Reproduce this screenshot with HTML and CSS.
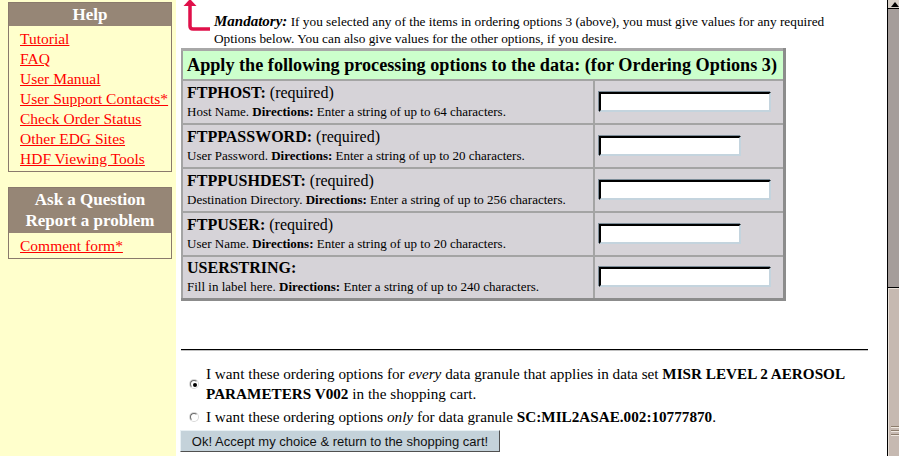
FILE: index.html
```html
<!DOCTYPE html>
<html>
<head>
<meta charset="utf-8">
<link rel="stylesheet" href="styles.css">
</head>
<body>
<div class="page">
  <aside class="sidebar">
    <div class="box">
      <div class="box-head">Help</div>
      <ul class="links">
        <li><a href="#">Tutorial</a></li>
        <li><a href="#">FAQ</a></li>
        <li><a href="#">User Manual</a></li>
        <li><a href="#">User Support Contacts*</a></li>
        <li><a href="#">Check Order Status</a></li>
        <li><a href="#">Other EDG Sites</a></li>
        <li><a href="#">HDF Viewing Tools</a></li>
      </ul>
    </div>
    <div class="box box2">
      <div class="box-head">Ask a Question<br>Report a problem</div>
      <ul class="links">
        <li><a href="#">Comment form*</a></li>
      </ul>
    </div>
  </aside>
  <main class="main">
    <div class="note">
      <svg class="arrow" width="33" height="34" viewBox="0 0 33 34">
        <path d="M9 4 V26 Q9 29 12 29 H29" fill="none" stroke="#e0104a" stroke-width="3.5"/>
        <path d="M2.5 6 L9 -1 L15.5 6 Z" fill="#e0104a"/>
      </svg>
      <p class="note-text"><b class="mand">Mandatory:</b> If you selected any of the items in ordering options 3 (above), you must give values for any required Options below. You can also give values for the other options, if you desire.</p>
    </div>
    <table class="opts">
      <tr><th colspan="2">Apply the following processing options to the data: (for Ordering Options 3)</th></tr>
      <tr>
        <td class="lbl"><span class="name">FTPHOST:</span> <span class="req">(required)</span><br><span class="desc">Host Name. <b>Directions:</b> Enter a string of up to 64 characters.</span></td>
        <td class="fld"><input class="txt wide" type="text"></td>
      </tr>
      <tr>
        <td class="lbl"><span class="name">FTPPASSWORD:</span> <span class="req">(required)</span><br><span class="desc">User Password. <b>Directions:</b> Enter a string of up to 20 characters.</span></td>
        <td class="fld"><input class="txt narrow" type="text"></td>
      </tr>
      <tr>
        <td class="lbl"><span class="name">FTPPUSHDEST:</span> <span class="req">(required)</span><br><span class="desc">Destination Directory. <b>Directions:</b> Enter a string of up to 256 characters.</span></td>
        <td class="fld"><input class="txt wide" type="text"></td>
      </tr>
      <tr>
        <td class="lbl"><span class="name">FTPUSER:</span> <span class="req">(required)</span><br><span class="desc">User Name. <b>Directions:</b> Enter a string of up to 20 characters.</span></td>
        <td class="fld"><input class="txt narrow" type="text"></td>
      </tr>
      <tr>
        <td class="lbl"><span class="name">USERSTRING:</span><br><span class="desc">Fill in label here. <b>Directions:</b> Enter a string of up to 240 characters.</span></td>
        <td class="fld"><input class="txt wide" type="text"></td>
      </tr>
    </table>
    <hr class="rule">
    <div class="choice">
      <input class="radio" type="radio" name="scope" checked>
      <span class="choice-text">I want these ordering options for <i>every</i> data granule that applies in data set <b>MISR LEVEL 2 AEROSOL PARAMETERS V002</b> in the shopping cart.</span>
    </div>
    <div class="choice single">
      <input class="radio" type="radio" name="scope">
      <span class="choice-text">I want these ordering options <i>only</i> for data granule <b>SC:MIL2ASAE.002:10777870</b>.</span>
    </div>
    <button class="ok" type="button">Ok! Accept my choice &amp; return to the shopping cart!</button>
  </main>
  <div class="scrollbar">
    <div class="sb-track">
      <div class="sb-btn"><span class="tri"></span></div>
      <div class="sb-gap"></div>
      <div class="sb-thumb"><span class="grip"></span><span class="grip"></span><span class="grip"></span></div>
    </div>
    <div class="sb-edge"></div>
  </div>
</div>
</body>
</html>
```

FILE: styles.css
```css
html, body {
  margin: 0;
  padding: 0;
  background: #ffffff;
  font-family: "Liberation Serif", "Times New Roman", serif;
  color: #000;
}
.page {
  display: flex;
  width: 899px;
  height: 456px;
  overflow: hidden;
}
.sidebar {
  width: 168px;
  flex: none;
  background: #ffffcc;
  padding: 2px 0 0 8px;
}
.box {
  width: 162px;
  border: 1px solid #8a7a6c;
  background: #ffffcc;
}
.box2 {
  margin-top: 15px;
}
.box-head {
  background: #968676;
  color: #ffffff;
  font-weight: bold;
  font-size: 17px;
  line-height: 21px;
  text-align: center;
  padding: 1px 0;
}
.box2 .box-head {
  padding: 1px 0 2px;
}
.links {
  list-style: none;
  margin: 0;
  padding: 3px 0 2px 11px;
}
.links li {
  font-size: 15.5px;
  line-height: 20px;
}
.links a {
  color: #ff0000;
  text-decoration: underline;
}
.main {
  width: 699px;
  flex: none;
  padding-left: 5px;
}
.note {
  display: flex;
  align-items: flex-start;
  height: 48px;
}
.arrow {
  flex: none;
  display: block;
}
.note-text {
  margin: 13px 0 0;
  font-size: 13.3px;
  line-height: 17px;
  width: 650px;
}
.mand {
  font-style: italic;
  font-size: 15px;
}
.opts {
  width: 605px;
  border-collapse: collapse;
  border-top: 3px solid #a8a8a8;
  border-left: 2px solid #a0a0a0;
  border-right: 3px solid #8c8c8c;
  border-bottom: 3px solid #8c8c8c;
  background: #d6d3d8;
}
.opts th {
  background: #ccffcc;
  text-align: left;
  white-space: nowrap;
  font-size: 18.2px;
  line-height: 22px;
  height: 30px;
  padding: 0 0 0 4px;
  box-sizing: border-box;
  border: 1px solid #a0a0a0;
}
.opts td {
  border: 2px solid #a4a4a4;
  vertical-align: middle;
  height: 44px;
  box-sizing: border-box;
  padding: 0 3px;
}
.opts td.lbl {
  width: 412px;
  padding-left: 4px;
}
.name {
  font-weight: bold;
  font-size: 16px;
  line-height: 18px;
}
.req {
  font-size: 16px;
}
.desc {
  font-size: 13px;
  line-height: 16px;
}
.txt {
  display: block;
  height: 20px;
  box-sizing: border-box;
  background: #fff;
  border-style: solid;
  border-width: 2px;
  border-color: #000 #c4d4de #c4d4de #000;
  box-shadow: -1px -1px 0 #7c8c98;
  margin: 0 0 0 1px;
  padding: 0 2px;
}
.wide { width: 172px; }
.narrow { width: 142px; }
.rule {
  width: 687px;
  margin: 48px 0 0;
  border: 0;
  border-top: 1px solid #000;
  border-bottom: 1px solid #c0c0c0;
  height: 0;
}
.choice {
  display: flex;
  align-items: center;
  margin-top: 13px;
  font-size: 15.2px;
  line-height: 20px;
}
.choice.single {
  margin-top: 3px;
}
.choice-text {
  width: 660px;
}
.radio {
  appearance: none;
  -webkit-appearance: none;
  flex: none;
  width: 8px;
  height: 8px;
  margin: 0 8px 0 9px;
  border-radius: 50%;
  border: 1px solid;
  border-color: #6c6c6c #ffffff #ffffff #6c6c6c;
  background: #ffffff;
  box-shadow: 0 0 0 1px #d8d8d8;
  position: relative;
}
.radio:checked::after {
  content: "";
  position: absolute;
  left: 2px;
  top: 2px;
  width: 4px;
  height: 4px;
  border-radius: 50%;
  background: #000;
}
.ok {
  display: block;
  margin: 3px 0 0 -1px;
  width: 320px;
  height: 22px;
  background: #c4d2da;
  border: 1px solid;
  border-color: #e8f0f4 #505050 #505050 #e8f0f4;
  font-family: "Liberation Sans", Arial, sans-serif;
  font-size: 13px;
  color: #111;
  padding: 0;
  text-align: center;
}
.scrollbar {
  width: 19px;
  flex: none;
  display: flex;
  margin-left: 7px;
  background: #ffffff;
}
.sb-track {
  width: 13px;
  border-left: 1px solid #000;
  background: #a59d9a;
  display: flex;
  flex-direction: column;
}
.sb-btn {
  height: 8px;
  background: #d8d0c8;
  border-bottom: 1px solid #000;
  display: flex;
  justify-content: center;
  align-items: flex-end;
}
.tri {
  width: 0;
  height: 0;
  border-left: 4px solid transparent;
  border-right: 4px solid transparent;
  border-bottom: 5px solid #000;
  margin-bottom: 1px;
}
.sb-gap {
  height: 278px;
}
.sb-thumb {
  flex: 1;
  background: #c6b9b1;
  border-top: 1px solid #000;
  box-shadow: inset 1px 1px 0 #e8e0d8, inset -1px 0 0 #8c8480;
  display: flex;
  flex-direction: column;
  align-items: center;
  padding-top: 138px;
  gap: 2px;
}
.grip {
  width: 8px;
  height: 1px;
  background: #8c7c6c;
  border-bottom: 1px solid #f0e8e0;
}
.sb-edge {
  width: 5px;
  background: linear-gradient(to right, #a8bccc 0, #a8bccc 2px, #3c5060 2px, #3c5060 4px, #ffffff 4px);
}
```
